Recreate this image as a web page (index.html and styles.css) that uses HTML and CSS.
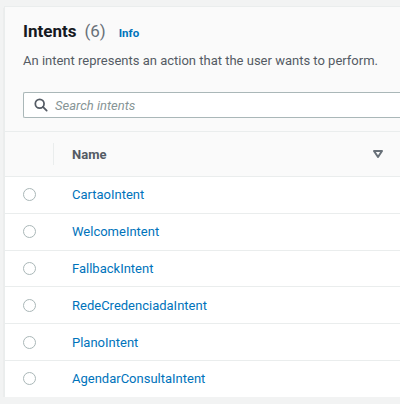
FILE: index.html
```html
<!DOCTYPE html>
<html>
<head>
<meta charset="utf-8">
<link rel="stylesheet" href="styles.css">
</head>
<body>
<div class="card">
  <div class="card-header">
    <h2 class="title">Intents <span class="count">(6)</span> <a class="info" href="#">Info</a></h2>
    <p class="desc">An intent represents an action that the user wants to perform.</p>
    <div class="search">
      <svg class="search-icon" width="14" height="14" viewBox="0 0 16 16"><circle cx="6.5" cy="6.5" r="5" fill="none" stroke="#545b64" stroke-width="2"/><line x1="10.2" y1="10.2" x2="14.5" y2="14.5" stroke="#545b64" stroke-width="2" stroke-linecap="round"/></svg>
      <span class="placeholder">Search intents</span>
    </div>
  </div>
  <div class="table">
    <div class="thead">
      <div class="cell-sel"><span class="divider"></span></div>
      <div class="cell-name th"><span>Name</span>
        <svg class="sort" width="10" height="8" viewBox="0 0 10 8"><path d="M1 1 H9 L5 7 Z" fill="none" stroke="#687078" stroke-width="2" stroke-linejoin="round"/></svg>
      </div>
    </div>
    <div class="row"><div class="cell-sel"><span class="radio"></span></div><a class="cell-name link" href="#">CartaoIntent</a></div>
    <div class="row"><div class="cell-sel"><span class="radio"></span></div><a class="cell-name link" href="#">WelcomeIntent</a></div>
    <div class="row"><div class="cell-sel"><span class="radio"></span></div><a class="cell-name link" href="#">FallbackIntent</a></div>
    <div class="row"><div class="cell-sel"><span class="radio"></span></div><a class="cell-name link" href="#">RedeCredenciadaIntent</a></div>
    <div class="row"><div class="cell-sel"><span class="radio"></span></div><a class="cell-name link" href="#">PlanoIntent</a></div>
    <div class="row last"><div class="cell-sel"><span class="radio"></span></div><a class="cell-name link" href="#">AgendarConsultaIntent</a></div>
  </div>
</div>
</body>
</html>
```
FILE: styles.css
```css
html, body { margin: 0; padding: 0; }
body {
  background: #f2f3f3;
  font-family: Roboto, "Open Sans", sans-serif;
  color: #16191f;
  overflow: hidden;
  padding-top: 6px;
}
.card {
  margin: 0 0 0 4px;
  width: 420px;
  background: #fff;
  border-top: 1px solid #eaeded;
  border-left: 1px solid #eaeded;
  box-shadow: 0 1px 0 0 #879596, 0 2px 1px 0 rgba(0,28,36,0.15);
}
.card-header {
  background: #fafafa;
  padding: 13px 0 13px 18px;
  border-bottom: 1px solid #eaeded;
}
.title {
  margin: 0;
  font-size: 17px;
  line-height: 22px;
  font-weight: 700;
  color: #16191f;
  display: flex;
  align-items: baseline;
}
.count {
  font-weight: 400;
  color: #687078;
  margin-left: 8px;
}
.info {
  font-size: 11.5px;
  font-weight: 700;
  color: #0073bb;
  text-decoration: none;
  margin-left: 13px;
}
.desc {
  margin: 7px 0 0;
  font-size: 13px;
  line-height: 20px;
  color: #545b64;
}
.search {
  margin-top: 21px;
  height: 24px;
  border: 1px solid #aab7b8;
  border-right: none;
  border-radius: 2px 0 0 2px;
  background: #fff;
  display: flex;
  align-items: center;
  padding-left: 10px;
}
.search-icon { flex: none; }
.placeholder {
  margin-left: 7px;
  font-size: 13px;
  font-style: italic;
  color: #879596;
}
.table { background: #fff; }
.thead {
  height: 44px;
  background: #fafafa;
  border-bottom: 1px solid #eaeded;
  display: flex;
  align-items: center;
}
.cell-sel {
  width: 49px;
  flex: none;
  display: flex;
  align-items: center;
  height: 100%;
  position: relative;
}
.divider {
  position: absolute;
  right: 0;
  top: 11px;
  bottom: 11px;
  border-left: 1px solid #eaeded;
}
.cell-name {
  margin-left: 18px;
  font-size: 13px;
}
.th {
  font-weight: 700;
  color: #545b64;
  width: 311px;
  display: flex;
  align-items: center;
  justify-content: space-between;
}
.row {
  height: 35.8px;
  border-bottom: 1px solid #eaeded;
  display: flex;
  align-items: center;
}
.row.last { border-bottom: none; }
.radio {
  width: 11px;
  height: 11px;
  border: 1px solid #aab7b8;
  border-radius: 50%;
  margin-left: 18px;
  box-sizing: content-box;
}
.link {
  color: #0073bb;
  text-decoration: none;
}
```
